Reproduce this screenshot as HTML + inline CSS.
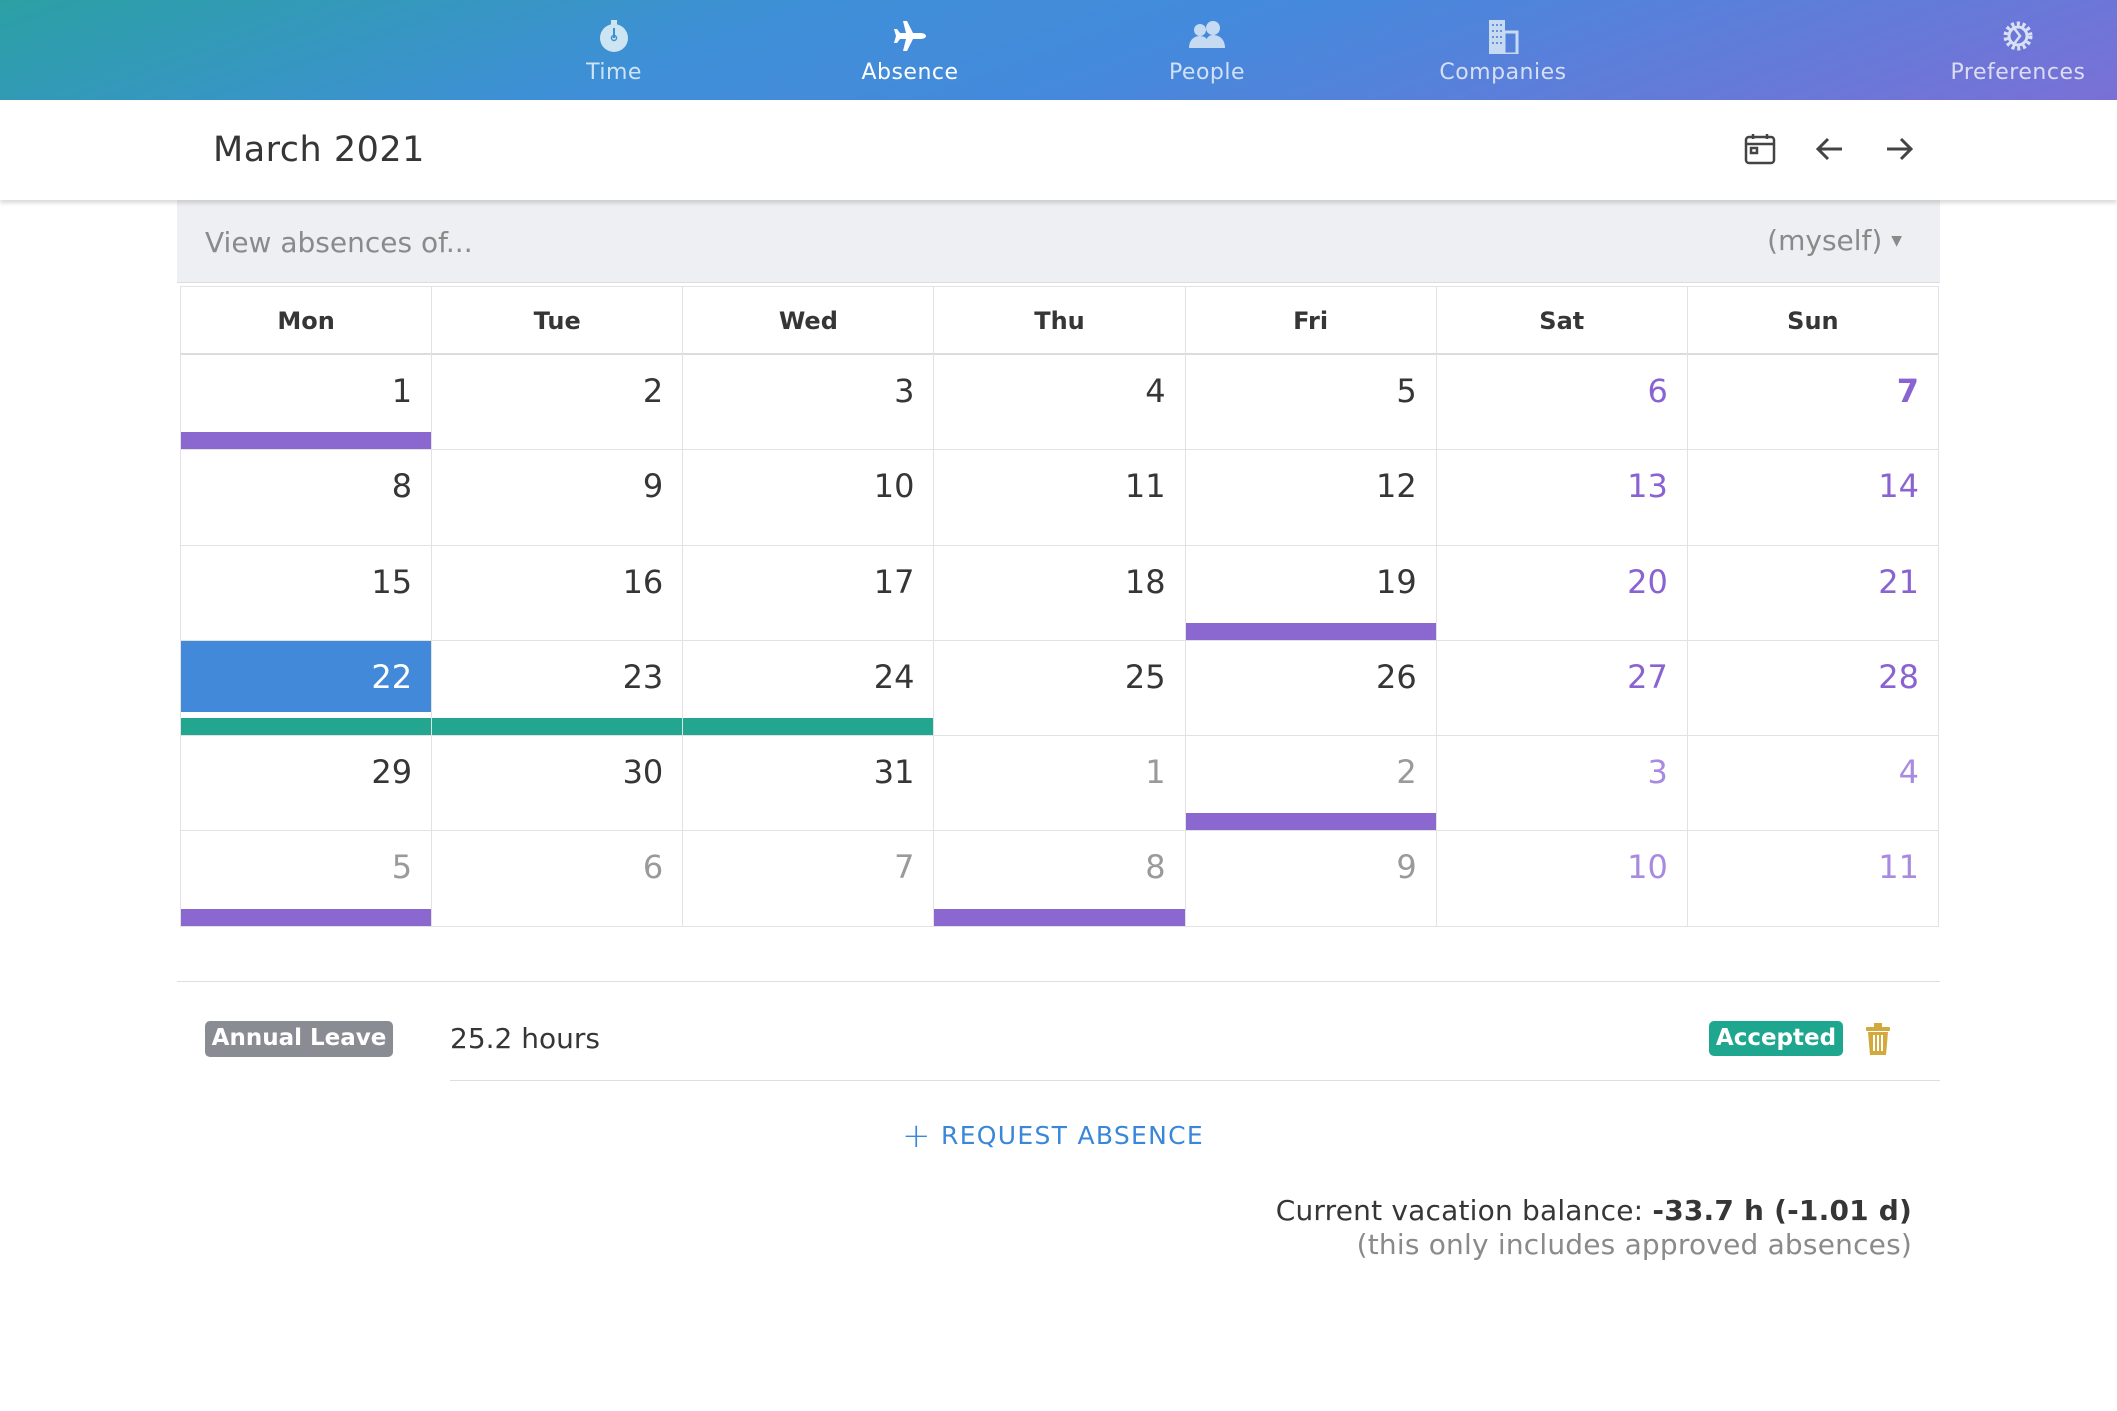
<!DOCTYPE html>
<html><head><meta charset="utf-8"><style>
*{box-sizing:border-box;margin:0;padding:0}
body{width:2117px;height:1411px;background:#fff;font-family:"DejaVu Sans","Liberation Sans",sans-serif;color:#363636;position:relative;overflow:hidden}
.nav{position:absolute;left:0;top:0;width:2117px;height:100px;background:linear-gradient(160deg,#2ba0a4 0%,#3f8fd8 35%,#4589dc 55%,#7a70d6 100%)}
.ni{position:absolute;top:18px;width:240px;margin-left:-120px;text-align:center;color:rgba(255,255,255,.75);font-size:22px;letter-spacing:.5px}
.ni svg{display:block;margin:0 auto 6px;height:36px}
.ni.act{color:#fff}
.hdr{position:absolute;top:100px;left:0;width:2117px;height:100px;background:#fff;box-shadow:0 3px 4px rgba(0,0,0,.15);z-index:2}
.title{position:absolute;left:213px;top:130px;font-size:35px;z-index:3;letter-spacing:.5px}
.filter{position:absolute;left:177px;top:200px;width:1763px;height:83px;background:#eeeff2;border-bottom:1px solid #ddd}
.filter .l{position:absolute;left:28px;top:26px;font-size:28px;color:#8a8a8a}
.filter .r{position:absolute;right:38px;top:24px;font-size:28px;color:#8a8a8a}
.cal{position:absolute;left:180px;top:286px;width:1759px;border-left:1px solid #e2e2e2;border-top:1px solid #e2e2e2}
.hrow{display:grid;grid-template-columns:repeat(7,1fr);height:68px;border-bottom:2px solid #dcdcdc}
.hrow div{border-right:1px solid #e2e2e2;text-align:center;font-weight:bold;font-size:24px;line-height:69px}
.grid{display:grid;grid-template-columns:repeat(7,1fr);grid-auto-rows:95.3px}
.c{position:relative;border-right:1px solid #e2e2e2;border-bottom:1px solid #e2e2e2}
.c span{position:absolute;right:19px;top:17px;font-size:32px}
.w span{color:#8a63d2}.g span{color:#9a9a9a}.gw span{color:#a88ae0}
.b{position:absolute;left:0;right:0;bottom:0;height:17px;background:#8b67d0}
.t{background:#22a690}
.sel{position:absolute;left:0;top:0;right:0;height:71px;background:#4289d9}
.line{position:absolute;height:1px;background:#dedede}
.badge{position:absolute;color:#fff;font-weight:bold;font-size:23px;border-radius:5px;text-align:center}
</style></head><body>
<div class="nav">
 <div class="ni" style="left:614px"><svg viewBox="0 0 36 36" width="36"><circle cx="18" cy="20" r="14" fill="#cde4f2"/><rect x="15" y="2" width="6" height="5" fill="#cde4f2"/><path d="M18 10v10" stroke="#3f8fd0" stroke-width="2"/><circle cx="18" cy="20" r="2.5" fill="none" stroke="#3f8fd0" stroke-width="1.5"/></svg>Time</div>
 <div class="ni act" style="left:910px"><svg viewBox="0 0 36 36" width="36"><path d="M2 18h32c0 2-3 3-6 3H21l-6 12h-4l3-12H8l-3 4H2l2-7-2-7h3l3 4h6L11 3h4l6 12h7c3 0 6 1 6 3z" fill="#fff"/></svg>Absence</div>
 <div class="ni" style="left:1207px"><svg viewBox="0 0 40 36" width="40"><circle cx="13" cy="12" r="6" fill="#c6daf2"/><circle cx="26" cy="10" r="7" fill="#c6daf2"/><path d="M2 30c0-8 5-12 11-12s9 4 9 12z" fill="#c6daf2"/><path d="M18 30c0-9 3-13 8-13s12 3 12 13z" fill="#c6daf2"/></svg>People</div>
 <div class="ni" style="left:1503px"><svg viewBox="0 0 36 36" width="36"><rect x="4" y="2" width="16" height="34" fill="#c6daf2"/><rect x="19" y="14" width="13" height="22" fill="none" stroke="#c6daf2" stroke-width="3"/><g fill="#6a90d8"><rect x="7" y="6" width="2" height="2"/><rect x="11" y="6" width="2" height="2"/><rect x="15" y="6" width="2" height="2"/><rect x="7" y="12" width="2" height="2"/><rect x="11" y="12" width="2" height="2"/><rect x="15" y="12" width="2" height="2"/><rect x="7" y="18" width="2" height="2"/><rect x="11" y="18" width="2" height="2"/><rect x="15" y="18" width="2" height="2"/><rect x="7" y="24" width="2" height="2"/><rect x="11" y="24" width="2" height="2"/><rect x="15" y="24" width="2" height="2"/></g></svg>Companies</div>
 <div class="ni" style="left:2018px"><svg viewBox="0 0 36 36" width="36"><circle cx="18" cy="18" r="12" fill="none" stroke="#d8e0f4" stroke-width="5" stroke-dasharray="3 2.5"/><circle cx="18" cy="18" r="9" fill="none" stroke="#d8e0f4" stroke-width="3"/><path d="M14 10l6 8-6 8" stroke="#d8e0f4" stroke-width="2.5" fill="none"/></svg>Preferences</div>
</div>
<div class="hdr"></div>
<div class="title">March 2021</div>
<svg style="position:absolute;left:1743px;top:132px;z-index:3" width="34" height="34" viewBox="0 0 34 34" fill="none" stroke="#444" stroke-width="2.5"><rect x="3" y="5" width="28" height="26" rx="3"/><path d="M3 12h28M10 2v5M24 2v5"/><rect x="8" y="16" width="6" height="5"/></svg>
<svg style="position:absolute;left:1814px;top:133px;z-index:3" width="32" height="32" viewBox="0 0 32 32" fill="none" stroke="#444" stroke-width="3"><path d="M28 16H5M14 6L4 16l10 10"/></svg>
<svg style="position:absolute;left:1883px;top:133px;z-index:3" width="32" height="32" viewBox="0 0 32 32" fill="none" stroke="#444" stroke-width="3"><path d="M4 16h23M18 6l10 10-10 10"/></svg>
<div class="filter"><div class="l">View absences of...</div><div class="r">(myself) <span style="font-size:14px;vertical-align:5px">▼</span></div></div>
<div class="cal">
 <div class="hrow"><div>Mon</div><div>Tue</div><div>Wed</div><div>Thu</div><div>Fri</div><div>Sat</div><div>Sun</div></div>
 <div class="grid">
  <div class="c"><span>1</span><div class="b"></div></div><div class="c"><span>2</span></div><div class="c"><span>3</span></div><div class="c"><span>4</span></div><div class="c"><span>5</span></div><div class="c w"><span>6</span></div><div class="c w"><span style="font-weight:bold">7</span></div>
  <div class="c"><span>8</span></div><div class="c"><span>9</span></div><div class="c"><span>10</span></div><div class="c"><span>11</span></div><div class="c"><span>12</span></div><div class="c w"><span>13</span></div><div class="c w"><span>14</span></div>
  <div class="c"><span>15</span></div><div class="c"><span>16</span></div><div class="c"><span>17</span></div><div class="c"><span>18</span></div><div class="c"><span>19</span><div class="b"></div></div><div class="c w"><span>20</span></div><div class="c w"><span>21</span></div>
  <div class="c"><div class="sel"></div><span style="color:#fff">22</span><div class="b t"></div></div><div class="c"><span>23</span><div class="b t"></div></div><div class="c"><span>24</span><div class="b t"></div></div><div class="c"><span>25</span></div><div class="c"><span>26</span></div><div class="c w"><span>27</span></div><div class="c w"><span>28</span></div>
  <div class="c"><span>29</span></div><div class="c"><span>30</span></div><div class="c"><span>31</span></div><div class="c g"><span>1</span></div><div class="c g"><span>2</span><div class="b"></div></div><div class="c gw"><span>3</span></div><div class="c gw"><span>4</span></div>
  <div class="c g"><span>5</span><div class="b"></div></div><div class="c g"><span>6</span></div><div class="c g"><span>7</span></div><div class="c g"><span>8</span><div class="b"></div></div><div class="c g"><span>9</span></div><div class="c gw"><span>10</span></div><div class="c gw"><span>11</span></div>
 </div>
</div>
<div class="line" style="left:177px;top:981px;width:1763px"></div>
<div class="badge" style="left:205px;top:1021px;width:188px;height:36px;line-height:35px;background:#8a8c93">Annual Leave</div>
<div style="position:absolute;left:450px;top:1022px;font-size:28px">25.2 hours</div>
<div class="badge" style="left:1709px;top:1021px;width:134px;height:35px;line-height:34px;background:#1fa68f">Accepted</div>
<svg style="position:absolute;left:1864px;top:1022px" width="28" height="34" viewBox="0 0 28 34" fill="#d2a93c"><rect x="2" y="5" width="24" height="4" rx="1"/><rect x="10" y="1" width="8" height="4"/><path d="M4 10h20l-2 23H6z"/><g fill="#fff"><rect x="9" y="13" width="2" height="16"/><rect x="13" y="13" width="2" height="16"/><rect x="17" y="13" width="2" height="16"/></g></svg>
<div class="line" style="left:450px;top:1080px;width:1490px"></div>
<div style="position:absolute;left:902px;top:1116px;font-size:25px;color:#3a86d9;letter-spacing:1.3px"><span style="font-size:34px;vertical-align:-3px;font-weight:300">+</span> REQUEST ABSENCE</div>
<div style="position:absolute;right:205px;top:1194px;font-size:28px;text-align:right;line-height:34px;letter-spacing:.2px">Current vacation balance: <b>-33.7 h (-1.01 d)</b><br><span style="color:#8a8a8a">(this only includes approved absences)</span></div>
</body></html>
